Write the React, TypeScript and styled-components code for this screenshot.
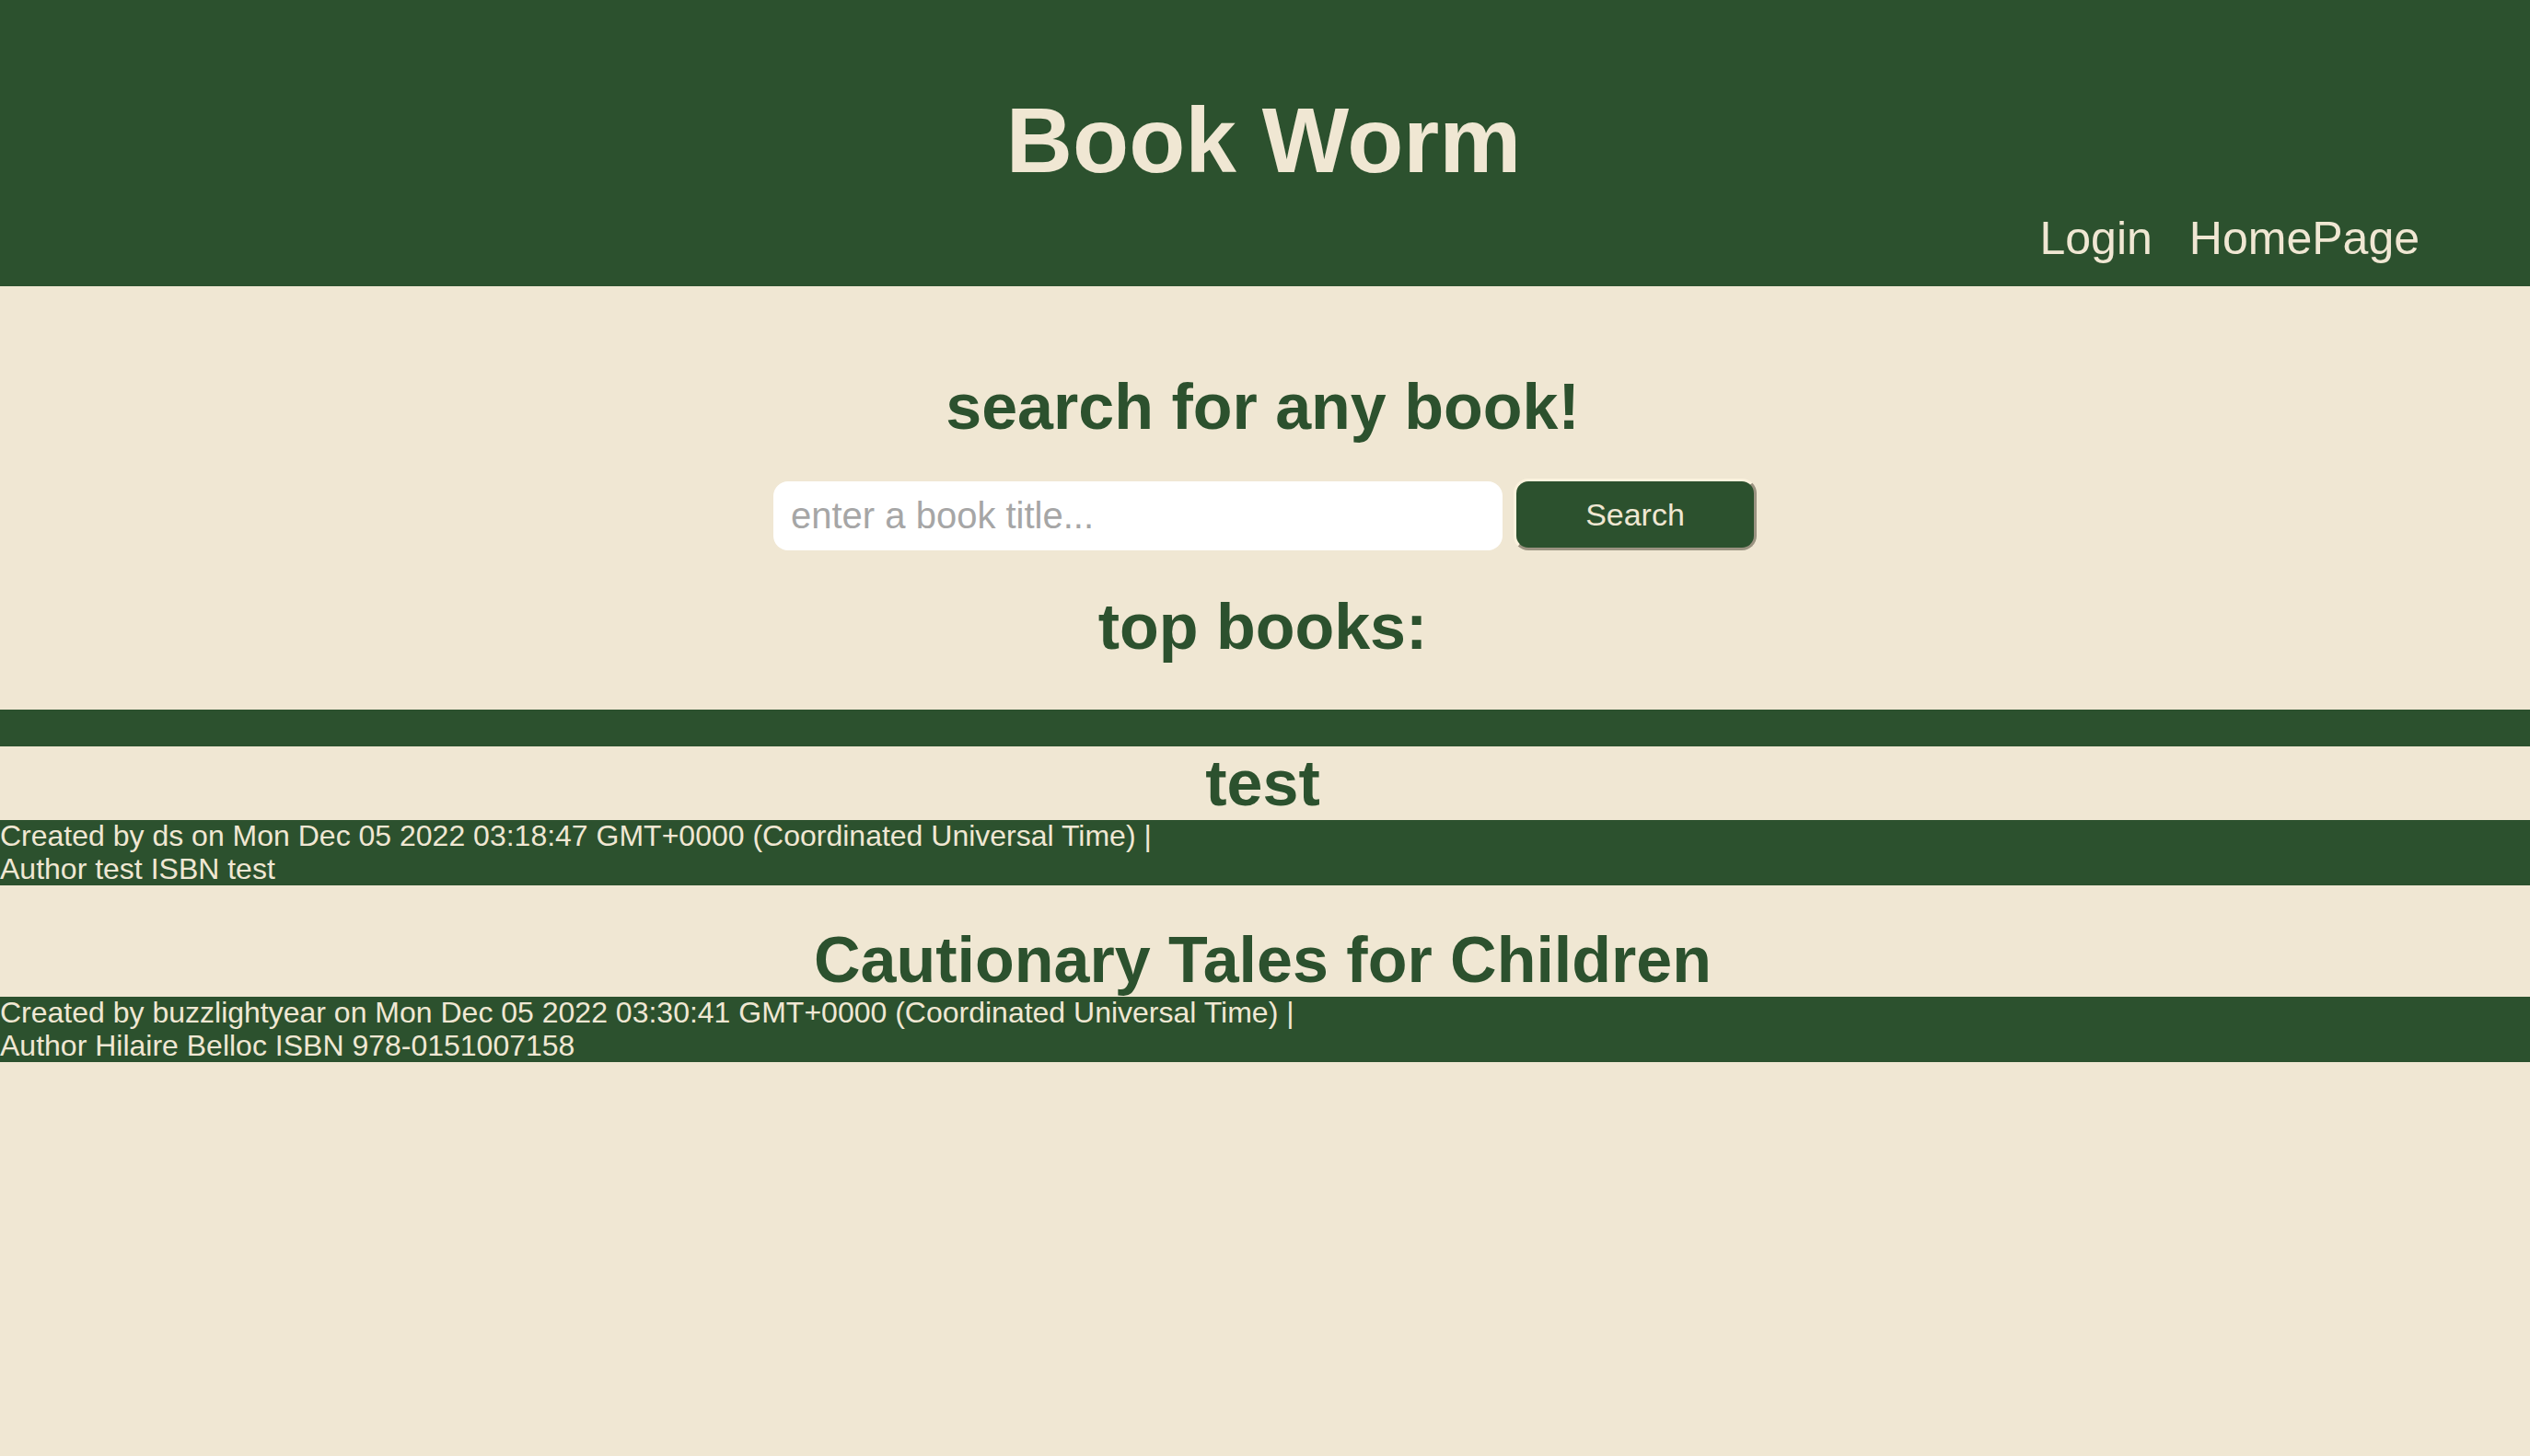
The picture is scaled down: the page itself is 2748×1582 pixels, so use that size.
import React from "react";
import styled, { createGlobalStyle } from "styled-components";

const GREEN = "#2c512e";
const CREAM = "#f0e7d3";
const FONT = `"Liberation Sans", Arial, Helvetica, sans-serif`;

const Global = createGlobalStyle`
  html, body {
    margin: 0;
    padding: 0;
    background: ${CREAM};
    font-family: ${FONT};
  }
  #root {
    min-height: 100vh;
    background: ${CREAM};
  }
`;

const Header = styled.header`
  background: ${GREEN};
  padding: 95px 120px 23px 0;
  display: flex;
  flex-direction: column;
`;

const Title = styled.h1`
  margin: 0;
  font-size: 100px;
  line-height: 115px;
  font-weight: 700;
  color: ${CREAM};
  text-align: center;
  padding-left: 117px;
`;

const Nav = styled.nav`
  margin-top: 21px;
  display: flex;
  justify-content: flex-end;
  gap: 40px;
`;

const NavLink = styled.a`
  font-size: 50px;
  line-height: 57px;
  color: ${CREAM};
  text-decoration: none;
  cursor: pointer;
`;

const Main = styled.main`
  padding-top: 91px;
  display: flex;
  flex-direction: column;
`;

const Heading = styled.h2<{ $gap?: number }>`
  margin: 0;
  padding-right: 5px;
  font-size: 70px;
  line-height: 80px;
  font-weight: 700;
  color: ${GREEN};
  text-align: center;
  margin-bottom: ${(p) => p.$gap ?? 0}px;
`;

const SearchRow = styled.form`
  display: flex;
  justify-content: center;
  align-items: flex-end;
  gap: 12px;
  margin-bottom: 43px;
`;

const SearchInput = styled.input`
  box-sizing: border-box;
  width: 792px;
  height: 75px;
  border: none;
  border-radius: 16px;
  background: #ffffff;
  padding: 0 19px;
  font-family: ${FONT};
  font-size: 40px;
  color: #333;
  outline: none;
  &::placeholder {
    color: #a6a6a6;
  }
`;

const SearchButton = styled.button`
  box-sizing: border-box;
  width: 264px;
  height: 78px;
  border: 3px solid;
  border-color: #fbf2dd #9b9381 #9b9381 #fbf2dd;
  border-radius: 16px;
  background: ${GREEN};
  color: ${CREAM};
  font-family: ${FONT};
  font-size: 34px;
  cursor: pointer;
`;

const Divider = styled.div`
  height: 40px;
  background: ${GREEN};
  margin-top: 50px;
`;

const BookList = styled.section`
  display: flex;
  flex-direction: column;
  gap: 41px;
`;

const Book = styled.article`
  display: flex;
  flex-direction: column;
`;

const Info = styled.div`
  background: ${GREEN};
  color: ${CREAM};
  font-size: 32px;
  line-height: 35.5px;
`;

const InfoLine = styled.span`
  display: block;
`;

const books = [
  {
    title: "test",
    user: "ds",
    date: "Mon Dec 05 2022 03:18:47 GMT+0000 (Coordinated Universal Time)",
    author: "test",
    isbn: "test",
  },
  {
    title: "Cautionary Tales for Children",
    user: "buzzlightyear",
    date: "Mon Dec 05 2022 03:30:41 GMT+0000 (Coordinated Universal Time)",
    author: "Hilaire Belloc",
    isbn: "978-0151007158",
  },
];

export default function App() {
  return (
    <>
      <Global />
      <Header>
        <Title>Book Worm</Title>
        <Nav>
          <NavLink>Login</NavLink>
          <NavLink>HomePage</NavLink>
        </Nav>
      </Header>
      <Main>
        <Heading $gap={38}>search for any book!</Heading>
        <SearchRow onSubmit={(e) => e.preventDefault()}>
          <SearchInput placeholder="enter a book title..." />
          <SearchButton type="submit">Search</SearchButton>
        </SearchRow>
        <Heading>top books:</Heading>
        <Divider />
        <BookList>
          {books.map((b) => (
            <Book key={b.title}>
              <Heading>{b.title}</Heading>
              <Info>
                <InfoLine>
                  Created by {b.user} on {b.date} |
                </InfoLine>
                <InfoLine>
                  Author {b.author} ISBN {b.isbn}
                </InfoLine>
              </Info>
            </Book>
          ))}
        </BookList>
      </Main>
    </>
  );
}
